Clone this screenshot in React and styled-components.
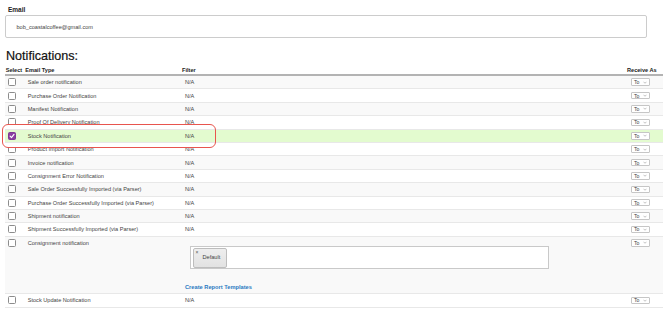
import styled, { createGlobalStyle } from "styled-components";

const GlobalStyle = createGlobalStyle`
  html, body {
    margin: 0;
    padding: 0;
    background: #ffffff;
  }
  body {
    font-family: "Liberation Sans", Arial, Helvetica, sans-serif;
    color: #333333;
  }
`;

const NOTIFICATIONS = [
  { label: "Sale order notification" },
  { label: "Purchase Order Notification" },
  { label: "Manifest Notification" },
  { label: "Proof Of Delivery Notification" },
  { label: "Stock Notification", checked: true, highlight: true },
  { label: "Product Import Notification" },
  { label: "Invoice notification" },
  { label: "Consignment Error Notification" },
  { label: "Sale Order Successfully Imported (via Parser)" },
  { label: "Purchase Order Successfully Imported (via Parser)" },
  { label: "Shipment notification" },
  { label: "Shipment Successfully Imported (via Parser)" },
  { label: "Consignment notification", expanded: true },
  { label: "Stock Update Notification" },
];

const Check = ({ checked }) => (
  <SCCheckbox $checked={checked}>
    {checked && (
      <svg width="6" height="6" viewBox="0 0 12 12">
        <path
          d="M2.2 6.4 L4.9 9.1 L10 2.8"
          fill="none"
          stroke="#ffffff"
          strokeWidth="2.2"
          strokeLinecap="round"
          strokeLinejoin="round"
        />
      </svg>
    )}
  </SCCheckbox>
);

const ReceiveSelect = () => (
  <SCSelect>
    <span>To</span>
    <svg width="4" height="3" viewBox="0 0 8 5">
      <path d="M1 1 L4 4 L7 1" fill="none" stroke="#999" strokeWidth="1.2" />
    </svg>
  </SCSelect>
);

const App = () => {
  return (
    <SCPage>
      <GlobalStyle />
      <SCLabel>Email</SCLabel>
      <SCInput>bob_coastalcoffee@gmail.com</SCInput>

      <SCHeading>Notifications:</SCHeading>

      <SCTable>
        <SCHeadRow>
          <SCHeadCell $pad={0.7}>Select</SCHeadCell>
          <SCHeadCell $pad={1.3}>Email Type</SCHeadCell>
          <SCHeadCell $pad={0}>Filter</SCHeadCell>
          <SCHeadCell $pad={0}>Receive As</SCHeadCell>
        </SCHeadRow>

        {NOTIFICATIONS.map((n, i) => (
          <SCRow
            key={n.label}
            $striped={i % 2 === 0}
            $highlight={n.highlight}
          >
            {n.highlight && <SCOutline />}
            <SCCell>
              <Check checked={n.checked} />
            </SCCell>
            <SCCell $padLeft={3.7}>{n.label}</SCCell>
            {n.expanded ? (
              <SCFilterBlock>
                <SCTagBox>
                  <SCTag>
                    <SCTagRemove>×</SCTagRemove>
                    <span>Default</span>
                  </SCTag>
                </SCTagBox>
                <SCLink>Create Report Templates</SCLink>
              </SCFilterBlock>
            ) : (
              <SCCell $padLeft={3}>N/A</SCCell>
            )}
            <SCCell $padLeft={4}>
              <ReceiveSelect />
            </SCCell>
          </SCRow>
        ))}
      </SCTable>
    </SCPage>
  );
};

export default App;

const SCPage = styled.div`
  width: 658px;
  padding: 5px 0 0 5px;
  display: flex;
  flex-direction: column;
`;

const SCLabel = styled.div`
  padding-left: 3px;
  font-size: 6.5px;
  line-height: 9px;
  font-weight: bold;
  color: #222222;
`;

const SCInput = styled.div`
  margin-top: 1px;
  width: 642px;
  height: 23px;
  box-sizing: border-box;
  border: 1px solid #cccccc;
  border-radius: 2px;
  padding-left: 10.5px;
  display: flex;
  align-items: center;
  font-size: 5.6px;
  color: #444444;
`;

const SCHeading = styled.h2`
  margin: 11px 0 0 1px;
  font-size: 12.6px;
  line-height: 15px;
  font-weight: normal;
  color: #111111;
  -webkit-text-stroke: 0.2px #111111;
`;

const SCTable = styled.div`
  display: flex;
  flex-direction: column;
`;

const columns = "19px 158px 1fr 36px";

const SCHeadRow = styled.div`
  display: grid;
  grid-template-columns: ${columns};
  height: 12px;
  box-sizing: border-box;
  border-bottom: 2px solid #b3b3b3;
  align-items: end;
`;

const SCHeadCell = styled.div`
  padding-left: ${(p) => p.$pad}px;
  font-size: 5.6px;
  line-height: 8px;
  font-weight: bold;
  color: #222222;
  white-space: nowrap;
`;

const SCRow = styled.div`
  position: relative;
  display: grid;
  grid-template-columns: ${columns};
  align-items: start;
  border-bottom: 1px solid #e8e8e8;
  background: ${(p) =>
    p.$highlight ? "#e3fbcf" : p.$striped ? "#f9f9f9" : "#ffffff"};
`;

const SCCell = styled.div`
  height: 12.4px;
  display: flex;
  align-items: center;
  padding-left: ${(p) => p.$padLeft ?? 3}px;
  font-size: 5.6px;
  color: #444444;
  white-space: nowrap;
`;

const SCCheckbox = styled.div`
  width: 8px;
  height: 8px;
  box-sizing: border-box;
  border-radius: 1.5px;
  border: 1px solid ${(p) => (p.$checked ? "#7e3894" : "#8c8c8c")};
  background: ${(p) => (p.$checked ? "#8a3fa2" : "#ffffff")};
  display: flex;
  align-items: center;
  justify-content: center;
`;

const SCSelect = styled.div`
  width: 18.5px;
  height: 7.5px;
  box-sizing: border-box;
  border: 1px solid #c6c6c6;
  border-radius: 1px;
  background: #ffffff;
  display: flex;
  align-items: center;
  justify-content: space-between;
  padding: 0 2px 0 2px;
  font-size: 5.2px;
  color: #444444;
`;

const SCFilterBlock = styled.div`
  display: flex;
  flex-direction: column;
  align-items: flex-start;
  padding: 8.9px 0 2.3px 3px;
`;

const SCTagBox = styled.div`
  margin-left: 5px;
  width: 358.7px;
  height: 23.6px;
  box-sizing: border-box;
  border: 1px solid #c9c9c9;
  background: #ffffff;
  padding: 1.6px;
  display: flex;
`;

const SCTag = styled.div`
  width: 34px;
  height: 19.4px;
  box-sizing: border-box;
  border: 1px solid #bdbdbd;
  border-radius: 2px;
  background: linear-gradient(#eeeeee, #e2e2e2);
  display: flex;
  align-items: flex-start;
  padding: 1px 0 0 2px;
  font-size: 5.6px;
  color: #444444;

  span:last-child {
    margin: 3.5px 0 0 4px;
  }
`;

const SCTagRemove = styled.span`
  font-size: 5px;
  line-height: 5px;
  color: #555555;
`;

const SCLink = styled.div`
  margin-top: 13.7px;
  font-size: 5.7px;
  line-height: 8px;
  font-weight: bold;
  color: #2b79c2;
  white-space: nowrap;
`;

const SCOutline = styled.div`
  position: absolute;
  z-index: 2;
  top: -5.1px;
  left: -3px;
  width: 214px;
  height: 24px;
  box-sizing: border-box;
  border: 1.5px solid #e8554e;
  border-radius: 6px;
  background: linear-gradient(
    to bottom,
    #ffffff 3.6px,
    transparent 3.6px,
    transparent calc(100% - 4px),
    #ffffff calc(100% - 4px)
  );
  background-clip: padding-box;
  pointer-events: none;
`;
